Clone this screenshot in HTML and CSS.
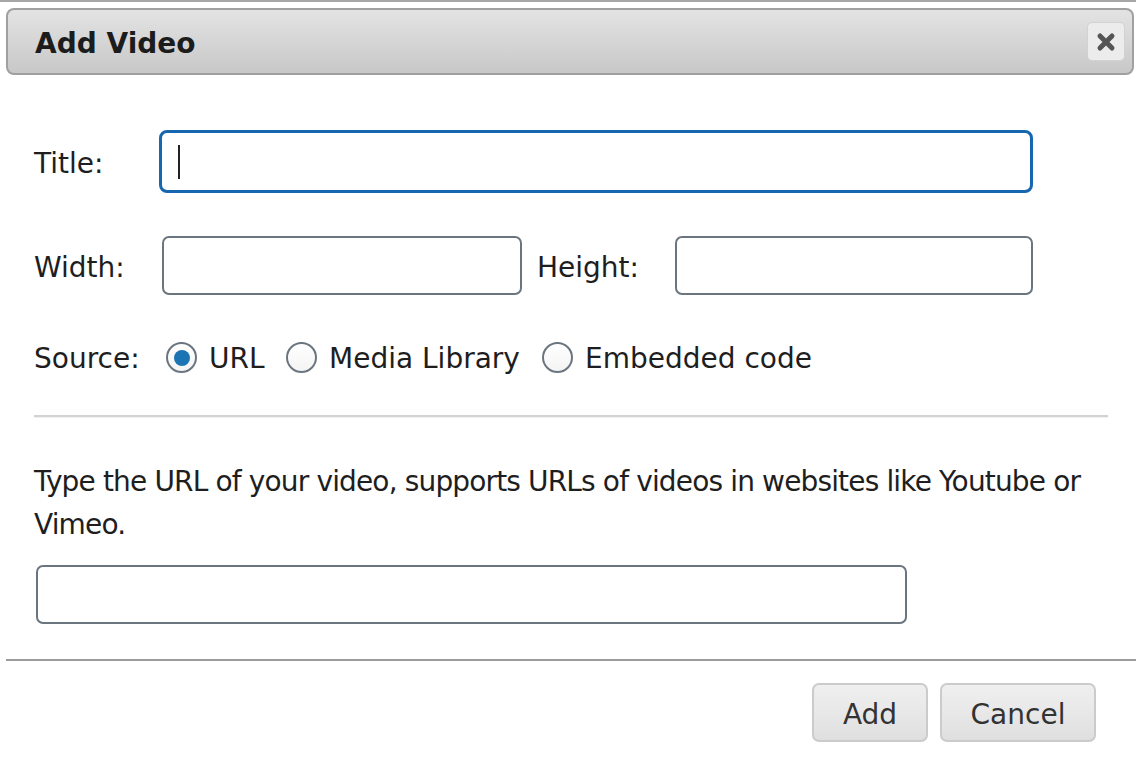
FILE: index.html
```html
<!DOCTYPE html>
<html>
<head>
<meta charset="utf-8">
<title>Add Video</title>
<link rel="stylesheet" href="styles.css">
</head>
<body>
<div class="dialog">
  <div class="titlebar">
    <span class="title">Add Video</span>
    <button class="close" type="button" aria-label="Close">
      <svg width="20" height="20" viewBox="0 0 20 20"><path d="M4 4 L16 16 M16 4 L4 16" stroke="#555" stroke-width="5" stroke-linecap="round" fill="none"/></svg>
    </button>
  </div>
  <div class="content">
    <div class="row row-title">
      <label class="lbl lbl-title">Title:</label>
      <div class="field field-title"><span class="caret"></span></div>
    </div>
    <div class="row row-size">
      <label class="lbl lbl-width">Width:</label>
      <div class="field field-width"></div>
      <label class="lbl lbl-height">Height:</label>
      <div class="field field-height"></div>
    </div>
    <div class="row row-source">
      <span class="lbl lbl-source">Source:</span>
      <span class="opt opt-url"><span class="radio checked"></span><span class="opt-text">URL</span></span>
      <span class="opt opt-media"><span class="radio"></span><span class="opt-text">Media Library</span></span>
      <span class="opt opt-embed"><span class="radio"></span><span class="opt-text">Embedded code</span></span>
    </div>
    <div class="sep"></div>
    <p class="hint">Type the URL of your video, supports URLs of videos in websites like Youtube or Vimeo.</p>
    <div class="field field-url"></div>
  </div>
  <div class="footer">
    <button class="btn btn-add" type="button">Add</button>
    <button class="btn btn-cancel" type="button">Cancel</button>
  </div>
</div>
</body>
</html>
```

FILE: styles.css
```css
* { box-sizing: border-box; }

body {
  margin: 0;
  background: #fff;
  font-family: "DejaVu Sans", Verdana, sans-serif;
  font-size: 28px;
  color: #1e1e1e;
}

.dialog {
  width: 1136px;
  height: 762px;
  border-top: 2px solid #a6a6a6;
  padding-top: 6px;
  overflow: hidden;
}

.titlebar {
  margin: 0 2px 0 6px;
  height: 67px;
  border: 2px solid #a0a0a0;
  border-radius: 8px;
  background: linear-gradient(#e3e3e3, #c8c8c8);
  display: flex;
  align-items: center;
  justify-content: space-between;
  padding: 0 7px 0 27px;
}

.title {
  font-weight: bold;
  font-size: 28px;
  color: #1c1c1c;
  padding-top: 3px;
}

.close {
  width: 38px;
  height: 39px;
  padding: 0;
  border: 1px solid #d2d2d2;
  border-radius: 5px;
  background: #ececec;
  display: flex;
  align-items: center;
  justify-content: center;
}

.content {
  padding: 55px 28px 0 34px;
}

.row {
  display: flex;
  align-items: center;
}

.lbl {
  display: block;
  padding-top: 4px;
}

.row-title { height: 63px; }
.lbl-title { width: 125px; padding-top: 3px; }

.field {
  background: #fff;
  border: 2px solid #6b7580;
  border-radius: 7px;
}

.field-title {
  width: 874px;
  height: 63px;
  border: 3px solid #1766b0;
  border-radius: 8px;
  display: flex;
  align-items: center;
  padding-left: 16px;
}

.caret {
  width: 2px;
  height: 34px;
  background: #222;
}

.row-size {
  margin-top: 43px;
  height: 59px;
}
.lbl-width { width: 128px; }
.field-width { width: 360px; height: 59px; }
.lbl-height { width: 138px; margin-left: 15px; }
.field-height { width: 358px; height: 59px; }

.row-source {
  margin-top: 47px;
  height: 31px;
}
.lbl-source { width: 132px; padding-top: 2px; }

.opt {
  display: flex;
  align-items: center;
  gap: 12px;
}
.opt-text { padding-top: 2px; }
.opt-url { width: 120px; }
.opt-media { width: 256px; }

.radio {
  width: 31px;
  height: 31px;
  border: 2px solid #6b7580;
  border-radius: 50%;
  background: linear-gradient(#ffffff, #f4f4f4);
  display: flex;
  align-items: center;
  justify-content: center;
  flex: none;
}
.radio.checked::after {
  content: "";
  width: 16px;
  height: 16px;
  border-radius: 50%;
  background: #1c74b4;
}

.sep {
  margin-top: 42px;
  height: 3px;
  border-top: 2px solid #d3d3d3;
  border-bottom: 1px solid #f1f1f1;
}

.hint {
  margin: 42px 0 0;
  line-height: 43px;
  letter-spacing: -0.85px;
}

.field-url {
  margin: 19px 0 0 2px;
  width: 871px;
  height: 59px;
}

.footer {
  margin: 35px 0 0 6px;
  border-top: 2px solid #9c9c9c;
  padding: 22px 40px 0 0;
  display: flex;
  justify-content: flex-end;
  gap: 12px;
}

.btn {
  height: 59px;
  border: 2px solid #cbcbcb;
  border-radius: 7px;
  background: linear-gradient(#efefef, #e8e8e8 50%, #dfdfdf);
  font-family: "DejaVu Sans", Verdana, sans-serif;
  font-size: 28px;
  color: #333;
  padding: 4px 0 0;
}
.btn-add { width: 116px; }
.btn-cancel { width: 156px; }
```
